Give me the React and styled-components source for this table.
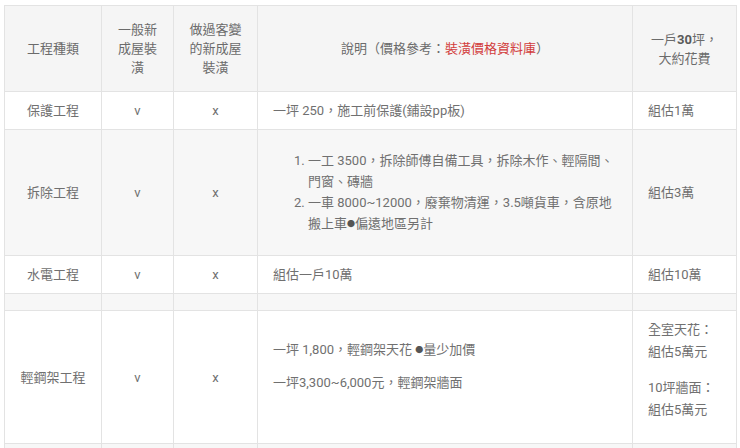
import styled, { createGlobalStyle } from 'styled-components';

const GlobalStyle = createGlobalStyle`
    body {
        margin: 0;
        padding: 5px 4px;
        background: #fff;
        font-family: Roboto, 'Noto Sans CJK TC', sans-serif;
        font-size: 13px;
        color: #707070;
    }
`;

const PriceTable = styled.table`
    width: 732px;
    table-layout: fixed;
    border-collapse: collapse;
    border: 1px solid #e3e3e3;
    line-height: 21px;
`;

const HeadCell = styled.th`
    font-weight: normal;
    background: #f5f5f5;
    border: 1px solid #e3e3e3;
    padding: 14px 15px;
    line-height: 19px;
    text-align: center;
    vertical-align: middle;
    color: #6b6b6b;
`;

const Row = styled.tr`
    background: ${(props) => (props.$striped ? '#f7f7f7' : '#fff')};
    height: ${(props) => (props.$height ? `${props.$height}px` : 'auto')};
`;

const Cell = styled.td`
    border: 1px solid #e3e3e3;
    padding: 8px 15px;
    vertical-align: middle;
    text-align: ${(props) => (props.$left ? 'left' : 'center')};
    color: #707070;
`;

const PriceLink = styled.a`
    color: #d23c3c;
    text-decoration: none;
`;

const Strong = styled.b`
    font-weight: bold;
    color: #5a5a5a;
`;

const Dot = styled.span`
    font-size: 8px;
    vertical-align: 1px;
    color: #555;
`;

const StepList = styled.ol`
    margin: 12px 0;
    padding-left: 35px;
`;

// 輕鋼架那列的說明與花費，行高比其他列高一點
const NoteStack = styled.div`
    display: flex;
    flex-direction: column;
    gap: ${(props) => props.$gap}px;
    padding-bottom: ${(props) => props.$bottom}px;
    line-height: 22px;
`;

const Note = styled.p`
    margin: 0;
`;

const App = () => {
    return (
        <>
            <GlobalStyle />
            <PriceTable>
                <colgroup>
                    <col style={{ width: 97 }} />
                    <col style={{ width: 72 }} />
                    <col style={{ width: 84 }} />
                    <col style={{ width: 375 }} />
                    <col style={{ width: 104 }} />
                </colgroup>
                <thead>
                    <tr>
                        <HeadCell>工程種類</HeadCell>
                        <HeadCell>一般新成屋裝潢</HeadCell>
                        <HeadCell>做過客變的新成屋裝潢</HeadCell>
                        <HeadCell>
                            說明（價格參考：<PriceLink href='#'>裝潢價格資料庫</PriceLink>）
                        </HeadCell>
                        <HeadCell>
                            一戶<Strong>30</Strong>坪，大約花費
                        </HeadCell>
                    </tr>
                </thead>
                <tbody>
                    <Row>
                        <Cell>保護工程</Cell>
                        <Cell>v</Cell>
                        <Cell>x</Cell>
                        <Cell $left>一坪 250，施工前保護(鋪設pp板)</Cell>
                        <Cell $left>組估1萬</Cell>
                    </Row>
                    <Row $striped>
                        <Cell>拆除工程</Cell>
                        <Cell>v</Cell>
                        <Cell>x</Cell>
                        <Cell $left>
                            <StepList>
                                <li>一工 3500，拆除師傅自備工具，拆除木作、輕隔間、門窗、磚牆</li>
                                <li>
                                    一車 8000~12000，廢棄物清運，3.5噸貨車，含原地搬上車<Dot>●</Dot>偏遠地區另計
                                </li>
                            </StepList>
                        </Cell>
                        <Cell $left>組估3萬</Cell>
                    </Row>
                    <Row>
                        <Cell>水電工程</Cell>
                        <Cell>v</Cell>
                        <Cell>x</Cell>
                        <Cell $left>組估一戶10萬</Cell>
                        <Cell $left>組估10萬</Cell>
                    </Row>
                    <Row $striped>
                        <Cell />
                        <Cell />
                        <Cell />
                        <Cell $left />
                        <Cell $left />
                    </Row>
                    <Row>
                        <Cell>輕鋼架工程</Cell>
                        <Cell>v</Cell>
                        <Cell>x</Cell>
                        <Cell $left>
                            <NoteStack $gap={10} $bottom={22}>
                                <Note>
                                    一坪 1,800，輕鋼架天花 <Dot>●</Dot>量少加價
                                </Note>
                                <Note>一坪3,300~6,000元，輕鋼架牆面</Note>
                            </NoteStack>
                        </Cell>
                        <Cell $left>
                            <NoteStack $gap={14} $bottom={14}>
                                <Note>
                                    全室天花：
                                    <br />
                                    組估5萬元
                                </Note>
                                <Note>
                                    10坪牆面：
                                    <br />
                                    組估5萬元
                                </Note>
                            </NoteStack>
                        </Cell>
                    </Row>
                    <Row $striped $height={40}>
                        <Cell />
                        <Cell />
                        <Cell />
                        <Cell $left />
                        <Cell $left />
                    </Row>
                </tbody>
            </PriceTable>
        </>
    );
};

export default App;
